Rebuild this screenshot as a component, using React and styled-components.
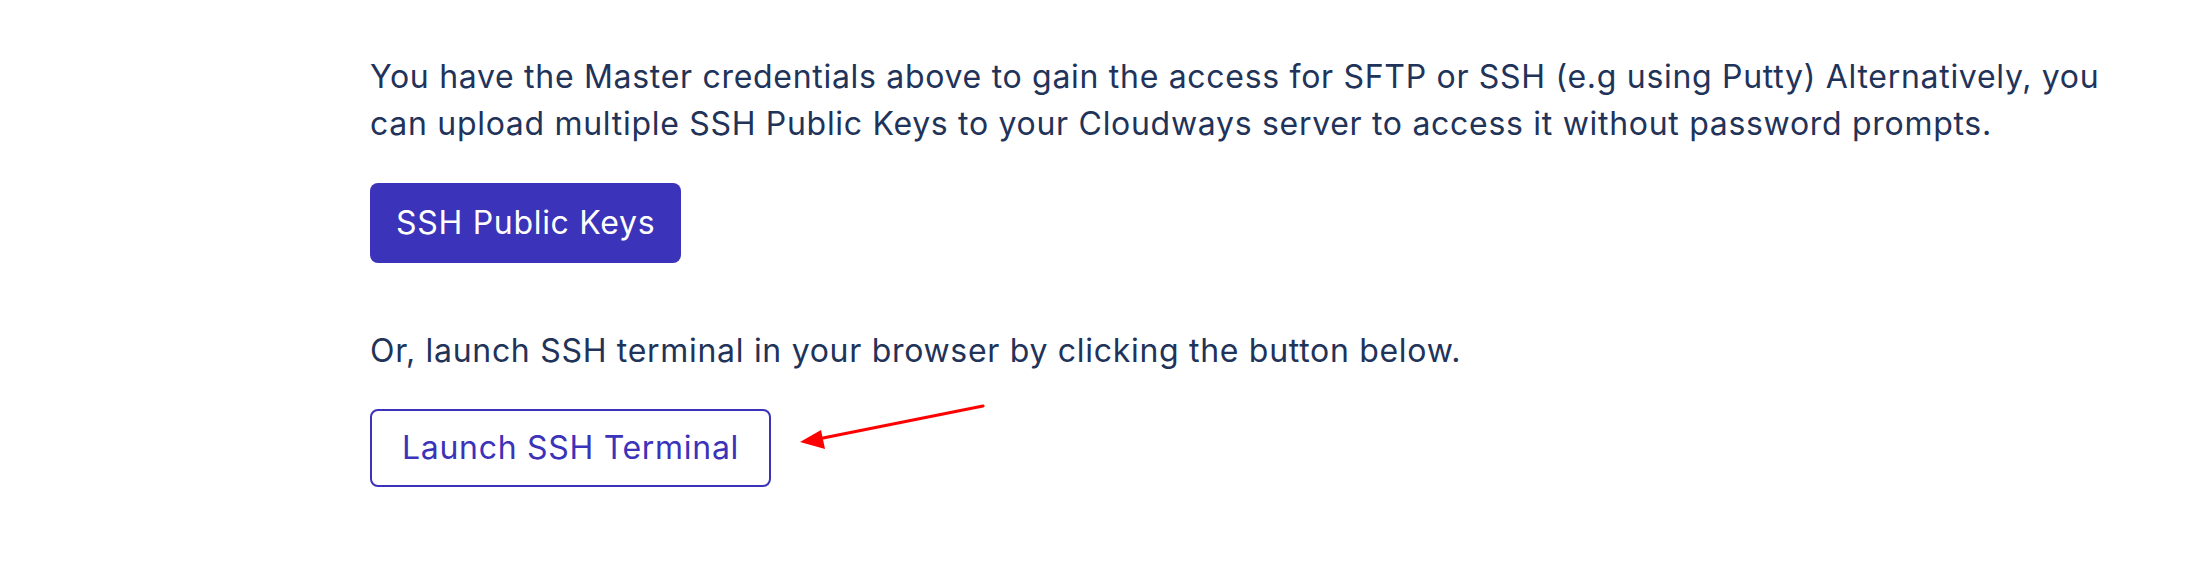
import styled, { createGlobalStyle } from "styled-components";

const GlobalStyle = createGlobalStyle`
    html, body {
        margin: 0;
        padding: 0;
        background: #ffffff;
    }
    body {
        font-family: "Inter", "Noto Sans", sans-serif;
    }
`;

const Page = styled.div`
    padding: 53px 0 0 370px;
`;

const Text = styled.p`
    margin: 0;
    max-width: 1740px;
    font-size: 32px;
    line-height: 47px;
    letter-spacing: 0.7px;
    color: #22335a;
    margin-top: ${props => props.$top || 0}px;
`;

const PrimaryButton = styled.button`
    display: block;
    margin-top: 36px;
    height: 80px;
    padding: 0 26px;
    border: none;
    border-radius: 8px;
    background: #3b33b9;
    color: #ffffff;
    font-family: inherit;
    font-size: 32px;
    line-height: 46px;
    letter-spacing: 0.7px;
    cursor: pointer;
`;

const ButtonRow = styled.div`
    display: flex;
    align-items: flex-start;
    margin-top: 35px;
`;

const OutlineButton = styled.button`
    height: 78px;
    padding: 0 30px;
    border: 2px solid #3b33b9;
    border-radius: 8px;
    background: #ffffff;
    color: #3b33b9;
    font-family: inherit;
    font-size: 32px;
    line-height: 46px;
    letter-spacing: 0.7px;
    cursor: pointer;
`;

const Arrow = styled.svg`
    margin-left: 26px;
    margin-top: -6px;
    flex-shrink: 0;
`;

export default function App() {
    return (
        <>
            <GlobalStyle />
            <Page>
                <Text>
                    You have the Master credentials above to gain the access for SFTP or SSH (e.g using Putty) Alternatively, you can upload multiple SSH Public Keys to your Cloudways server to access it without password prompts.
                </Text>
                <PrimaryButton>SSH Public Keys</PrimaryButton>
                <Text $top={64}>Or, launch SSH terminal in your browser by clicking the button below.</Text>
                <ButtonRow>
                    <OutlineButton>Launch SSH Terminal</OutlineButton>
                    <Arrow width="190" height="48" viewBox="0 0 190 48">
                        <line x1="186" y1="3" x2="26" y2="35" stroke="#ff0000" strokeWidth="3.2" strokeLinecap="round" />
                        <polygon points="3,39 24,27 28,46" fill="#ff0000" />
                    </Arrow>
                </ButtonRow>
            </Page>
        </>
    );
}
